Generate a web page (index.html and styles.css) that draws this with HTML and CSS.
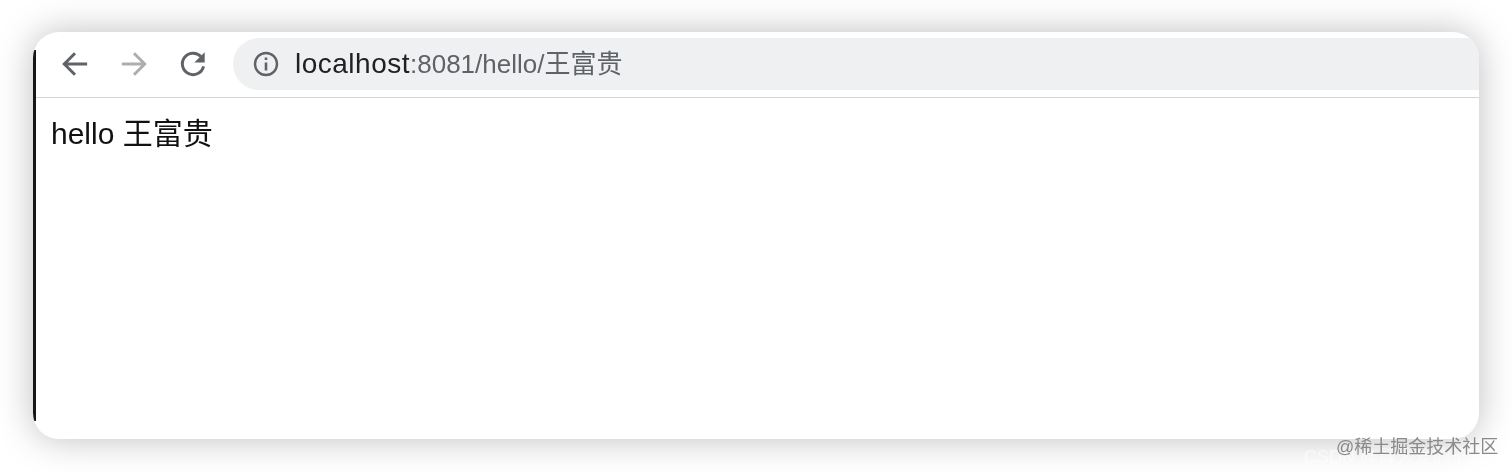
FILE: index.html
```html
<!DOCTYPE html>
<html lang="en">
<head>
    <meta charset="UTF-8">
    <meta name="viewport" content="width=device-width, initial-scale=1.0">
    <title>hello</title>
    <link rel="stylesheet" href="styles.css">
</head>
<body>
    <div class="browser">
        <div class="toolbar">
            <div class="nav-buttons">
                <svg class="nav-icon" viewBox="0 0 30 30" fill="none" stroke="#5f6368" stroke-width="3.2">
                    <path d="M28 15H4M15 3.5 3.5 15 15 26.5"/>
                </svg>
                <svg class="nav-icon" viewBox="0 0 30 30" fill="none" stroke="#adaeb0" stroke-width="3.2">
                    <path d="M2 15h24M15 3.5 26.5 15 15 26.5"/>
                </svg>
                <svg class="nav-icon" viewBox="0 0 30 30">
                    <path d="M23.5 7A11.5 11.5 0 1 0 26.3 17.5" fill="none" stroke="#5f6368" stroke-width="3.2"/>
                    <path d="M27.5 2.5v11h-11z" fill="#5f6368"/>
                </svg>
            </div>
            <div class="address-bar">
                <svg class="info-icon" viewBox="0 0 26 26">
                    <circle cx="13" cy="13" r="11" fill="none" stroke="#5f6368" stroke-width="2.4"/>
                    <path d="M11.7 11.5h2.6v8h-2.6zM11.7 6.5h2.6v2.6h-2.6z" fill="#5f6368"/>
                </svg>
                <span class="url"><span class="host">localhost</span>:8081/hello/王富贵</span>
            </div>
        </div>
        <div class="content">hello 王富贵</div>
    </div>
    <div class="mark-csdn">CSDN @肆大爱的王富贵</div>
    <div class="mark-juejin">@稀土掘金技术社区</div>
</body>
</html>
```

FILE: styles.css
```css
body {
    margin: 0;
    height: 472px;
    overflow: hidden;
    position: relative;
    background-color: #ffffff;
    padding: 32px 33px 0;
    box-sizing: border-box;
    font-family: "Liberation Sans", "Noto Sans CJK SC", sans-serif;
}

/* browser window */
.browser {
    position: relative;
    height: 407px;
    padding-left: 3px;
    background: #ffffff;
    border-radius: 26px;
    box-shadow: 0 0 36px rgba(0, 0, 0, 0.26);
    overflow: hidden;
}

/* black edge down the left side, stops short of the corners */
.browser::before {
    content: "";
    position: absolute;
    left: 0;
    top: 18px;
    bottom: 18px;
    width: 3px;
    background: #161616;
}

.toolbar {
    display: flex;
    height: 66px;
    box-sizing: border-box;
    padding-top: 6px;
    border-bottom: 1px solid #d4d5d7;
}

.nav-buttons {
    display: flex;
    gap: 31px;
    width: 197px;
    padding: 12px 0 0 25px;
    box-sizing: border-box;
}

.nav-icon {
    width: 28px;
    height: 28px;
    filter: blur(0.4px);
}

.address-bar {
    display: flex;
    align-items: center;
    flex: 1;
    height: 52px;
    padding-left: 20px;
    gap: 16px;
    background: #eff0f2;
    border-radius: 26px 0 0 26px;
}

.info-icon {
    width: 26px;
    height: 26px;
    filter: blur(0.4px);
}

.url {
    font-size: 26px;
    line-height: 48px;
    color: #5f6368;
    filter: blur(0.5px);
}

.host {
    font-size: 28px;
    color: #202124;
    letter-spacing: 0.5px;
}

.content {
    padding: 18px 0 0 15px;
    font-size: 30px;
    line-height: 36px;
    color: #111111;
    filter: blur(0.5px);
}

/* watermarks over the picture */
.mark-csdn {
    position: absolute;
    left: 1304px;
    top: 442px;
    font-size: 18px;
    color: rgba(255, 255, 255, 0.6);
    white-space: nowrap;
}

.mark-juejin {
    position: absolute;
    left: 1336px;
    top: 432px;
    font-size: 18px;
    color: #8a8a8a;
    white-space: nowrap;
    filter: blur(0.4px);
}
```
